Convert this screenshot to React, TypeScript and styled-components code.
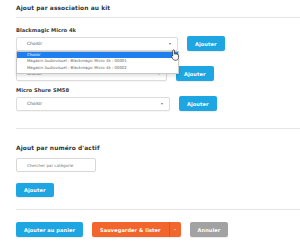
import styled, { createGlobalStyle } from 'styled-components'

const GlobalStyle = createGlobalStyle`
  html, body {
    margin: 0;
    padding: 0;
    background: #fff;
  }
  body {
    font-family: "DejaVu Sans", "Liberation Sans", sans-serif;
    color: #333;
  }
`

const kitItems = [
    { label: 'Blackmagic Micro 4k', width: 162, open: true, hidden: false },
    { label: 'Micro HF Sennheiser', width: 151, open: false, hidden: true },
    { label: 'Micro Shure SM58', width: 154, open: false, hidden: false },
]

const options = [
    'Magasin Audiovisuel : Blackmagic Micro 4k : 00001',
    'Magasin Audiovisuel : Blackmagic Micro 4k : 00002',
]

const Cursor = () => (
    <CursorSvg width="9" height="12" viewBox="0 0 9 12">
        <path
            d="M2.6 0.8 C3.2 0.8 3.5 1.2 3.5 1.8 L3.5 5 C3.8 4.7 4.6 4.7 4.9 5.2 C5.3 4.9 6 5 6.2 5.5 C6.6 5.3 7.4 5.5 7.4 6.2 L7.4 8.6 C7.4 10 6.6 11.2 5.2 11.2 L3.8 11.2 C2.9 11.2 2.3 10.6 1.8 9.9 L0.6 7.8 C0.3 7.3 0.5 6.8 0.9 6.7 C1.3 6.6 1.6 6.8 1.7 7.1 L1.7 1.8 C1.7 1.2 2 0.8 2.6 0.8 Z"
            fill="#fff"
            stroke="#222"
            strokeWidth="0.7"
        />
    </CursorSvg>
)

const App = () => {
    return (
        <Page>
            <GlobalStyle />
            <SectionTitle>Ajout par association au kit</SectionTitle>
            <Divider $top={5} />
            {kitItems.map((item, i) => (
                <FieldGroup key={item.label} $top={i === 0 ? 9 : 6}>
                    <FieldLabel $hidden={item.hidden}>{item.hidden ? '\u00a0' : item.label}</FieldLabel>
                    <FieldRow>
                        <SelectBox $width={item.width}>
                            <SelectText>Choisir</SelectText>
                            <SelectArrow />
                            {item.open && (
                                <DropdownList>
                                    <DropdownOption $active>Choisir</DropdownOption>
                                    {options.map((o) => (
                                        <DropdownOption key={o}>{o}</DropdownOption>
                                    ))}
                                    <Cursor />
                                </DropdownList>
                            )}
                        </SelectBox>
                        <Button $variant="blue">Ajouter</Button>
                    </FieldRow>
                </FieldGroup>
            ))}
            <Divider $top={17} />
            <SectionTitle $top={16}>Ajout par numéro d'actif</SectionTitle>
            <SearchInput placeholder="Chercher par catégorie" />
            <SmallButtonRow>
                <Button $variant="blue">Ajouter</Button>
            </SmallButtonRow>
            <Divider $top={12} />
            <ActionBar>
                <Button $variant="blue">Ajouter au panier</Button>
                <SplitButton>
                    <SplitMain>Sauvegarder &amp; lister</SplitMain>
                    <SplitCaret>
                        <Caret />
                    </SplitCaret>
                </SplitButton>
                <Button $variant="gray">Annuler</Button>
            </ActionBar>
        </Page>
    )
}

const Page = styled.div`
  width: 300px;
  height: 241px;
  overflow: hidden;
  padding-left: 16px;
  box-sizing: border-box;
`

const SectionTitle = styled.div<{ $top?: number }>`
  margin-top: ${(p) => p.$top ?? 5}px;
  font-size: 5.9px;
  line-height: 7px;
  font-weight: bold;
  color: #333;
  letter-spacing: 0.1px;
`

const Divider = styled.div<{ $top: number }>`
  margin-top: ${(p) => p.$top}px;
  height: 1px;
  background: #e4e4e4;
`

const FieldGroup = styled.div<{ $top: number }>`
  margin-top: ${(p) => p.$top}px;
  display: flex;
  flex-direction: column;
  gap: 3px;
`

const FieldLabel = styled.div<{ $hidden?: boolean }>`
  font-size: 5.2px;
  line-height: 6px;
  font-weight: bold;
  color: #3a3a3a;
  visibility: ${(p) => (p.$hidden ? 'hidden' : 'visible')};
`

const FieldRow = styled.div`
  display: flex;
  align-items: center;
  gap: 9px;
  height: 15px;
`

const SelectBox = styled.div<{ $width: number }>`
  position: relative;
  width: ${(p) => p.$width}px;
  height: 14px;
  box-sizing: border-box;
  border: 1px solid #dcdcdc;
  border-radius: 2px;
  background: #fff;
  box-shadow: 0 1px 1px rgba(0, 0, 0, 0.04);
  display: flex;
  align-items: center;
  padding: 0 6px 0 10px;
`

const SelectText = styled.span`
  flex: 1;
  font-size: 4.4px;
  color: #555;
`

const SelectArrow = styled.span`
  width: 0;
  height: 0;
  border-left: 1.6px solid transparent;
  border-right: 1.6px solid transparent;
  border-top: 2px solid #777;
`

const DropdownList = styled.div`
  position: absolute;
  top: 13px;
  left: -1px;
  width: 163px;
  box-sizing: border-box;
  background: #fff;
  border: 1px solid #c8c8c8;
  box-shadow: 0 2px 3px rgba(0, 0, 0, 0.12);
  padding-bottom: 1px;
  z-index: 2;
`

const DropdownOption = styled.div<{ $active?: boolean }>`
  height: 6.7px;
  line-height: 6.7px;
  padding-left: 10px;
  font-size: 3.9px;
  white-space: nowrap;
  color: ${(p) => (p.$active ? '#fff' : '#666')};
  background: ${(p) => (p.$active ? '#1e7ff0' : 'transparent')};
`

const CursorSvg = styled.svg`
  position: absolute;
  left: 154px;
  top: -3px;
`

const Button = styled.button<{ $variant: 'blue' | 'gray' }>`
  height: 15px;
  padding: 0 8px;
  border: none;
  border-radius: 2px;
  font-family: inherit;
  font-size: 5px;
  font-weight: bold;
  color: #fff;
  letter-spacing: 0.1px;
  background: ${(p) => (p.$variant === 'blue' ? '#1da6e2' : '#a2a2a2')};
  box-shadow: 0 1px 1px rgba(0, 0, 0, 0.08);
  white-space: nowrap;
  cursor: pointer;
`

const SearchInput = styled.input`
  display: block;
  margin-top: 6px;
  width: 80px;
  height: 14px;
  box-sizing: border-box;
  border: 1px solid #d8d8d8;
  border-radius: 2px;
  padding: 0 0 0 10px;
  font-family: inherit;
  font-size: 4px;
  outline: none;
  ::placeholder {
    color: #9a9a9a;
    font-weight: bold;
  }
`

const SmallButtonRow = styled.div`
  margin-top: 11px;
  display: flex;
  ${Button} {
    height: 14px;
  }
`

const ActionBar = styled.div`
  margin-top: 12px;
  display: flex;
  gap: 9px;
`

const SplitButton = styled.div`
  display: flex;
  height: 15px;
  border-radius: 2px;
  overflow: hidden;
  background: #f2652d;
  box-shadow: 0 1px 1px rgba(0, 0, 0, 0.08);
`

const SplitMain = styled.div`
  display: flex;
  align-items: center;
  padding: 0 8px;
  font-size: 5px;
  font-weight: bold;
  color: #fff;
  white-space: nowrap;
  letter-spacing: 0.1px;
`

const SplitCaret = styled.div`
  width: 11px;
  display: flex;
  align-items: center;
  justify-content: center;
  border-left: 1px solid rgba(0, 0, 0, 0.12);
`

const Caret = styled.span`
  width: 0;
  height: 0;
  border-left: 1.3px solid transparent;
  border-right: 1.3px solid transparent;
  border-top: 1.6px solid #fff;
`

export default App
